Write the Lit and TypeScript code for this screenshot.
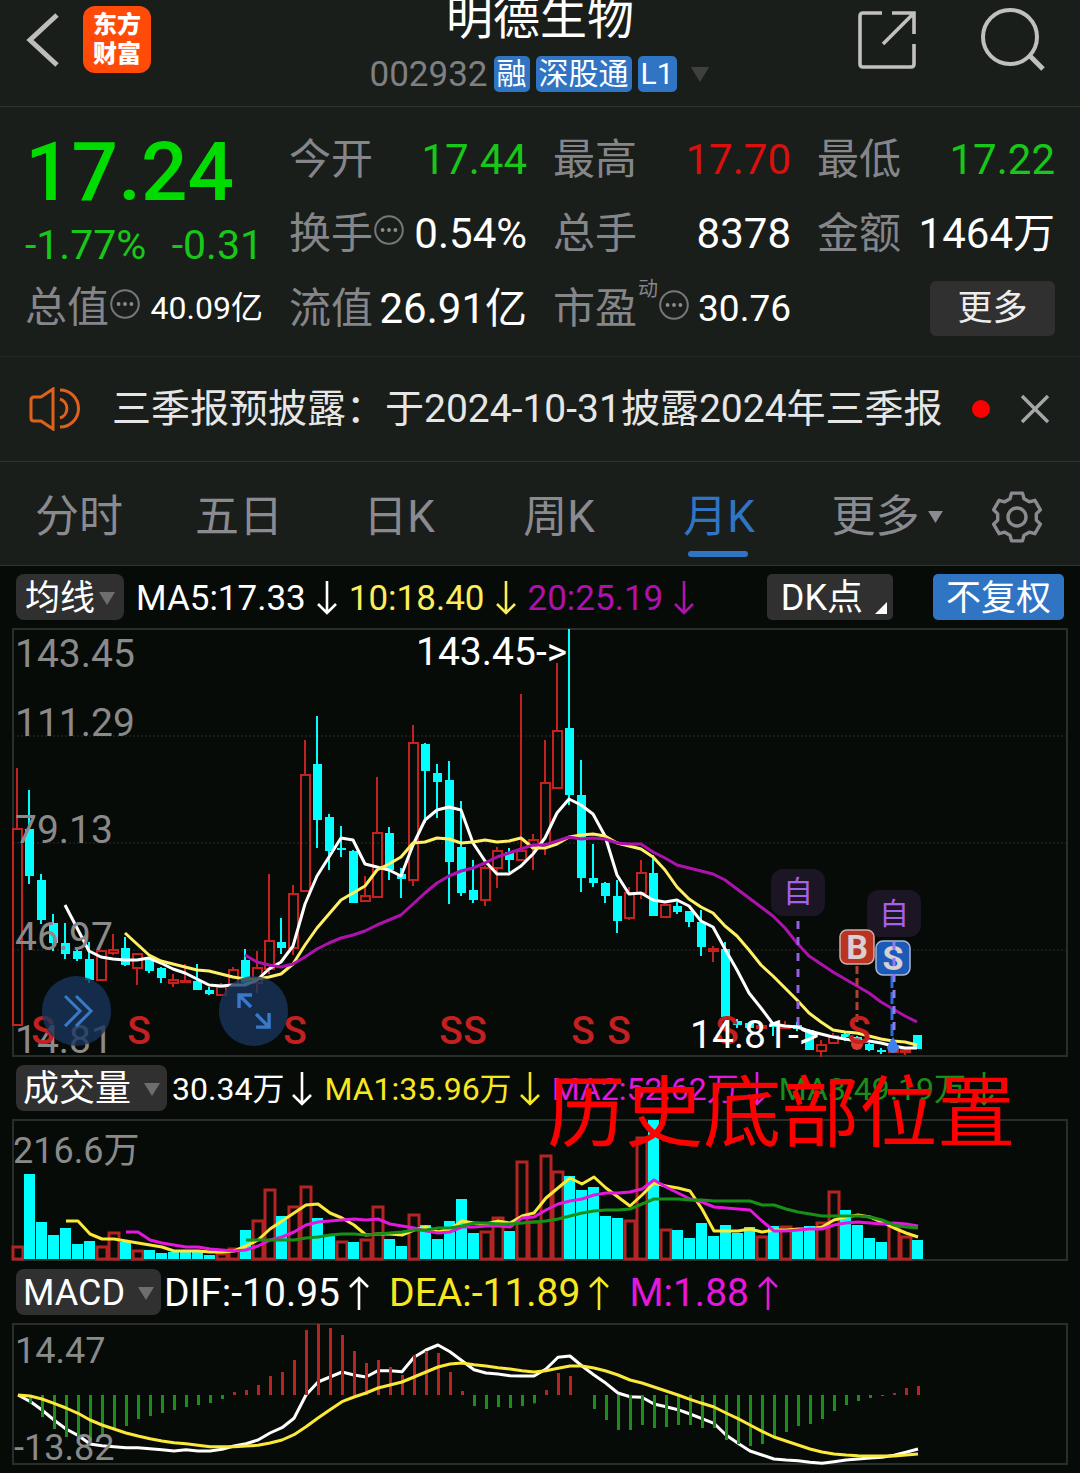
import { LitElement, html, svg, css, nothing } from "lit";
import { customElement, state } from "lit/decorators.js";

const STEP = 12;
const CYAN = "#00ffff";
const RED = "#c3221f";

type Candle = ["u" | "d", number, number, number, number];

// direction, high, body top, body bottom, low
const CANDLES: Candle[] = [
  ["u", 148, 209, 405, 405], ["d", 170, 209, 256, 264], ["d", 254, 260, 300, 304], ["d", 294, 303, 323, 331],
  ["d", 303, 323, 334, 339], ["d", 329, 331, 339, 341], ["d", 322, 339, 360, 363], ["u", 330, 331, 360, 360],
  ["u", 314, 330, 333, 335], ["d", 317, 328, 345, 346], ["u", 334, 334, 348, 365], ["d", 338, 339, 351, 353],
  ["d", 347, 348, 358, 363], ["u", 354, 360, 363, 367], ["u", 344, 361, 362, 362], ["d", 344, 361, 370, 370],
  ["d", 367, 370, 374, 375], ["u", 363, 367, 375, 375], ["u", 347, 350, 365, 367], ["d", 329, 340, 363, 365],
  ["u", 331, 348, 363, 373], ["u", 254, 321, 349, 354], ["d", 298, 322, 328, 334], ["u", 265, 274, 328, 335],
  ["u", 120, 155, 271, 271], ["d", 96, 144, 200, 228], ["d", 194, 197, 231, 250], ["d", 206, 228, 230, 237],
  ["d", 230, 231, 283, 283], ["u", 256, 276, 281, 281], ["u", 157, 213, 277, 277], ["d", 207, 213, 250, 260],
  ["d", 248, 254, 259, 278], ["u", 105, 123, 260, 266], ["d", 123, 124, 151, 203], ["d", 144, 153, 162, 198],
  ["d", 141, 160, 242, 284], ["d", 181, 227, 273, 276], ["d", 240, 270, 280, 283], ["u", 246, 248, 280, 286],
  ["u", 227, 231, 248, 268], ["d", 228, 232, 240, 252], ["u", 74, 231, 240, 240], ["u", 214, 220, 226, 250],
  ["u", 120, 163, 224, 235], ["u", 43, 111, 168, 168], ["d", 9, 108, 175, 185], ["d", 140, 175, 258, 272],
  ["d", 224, 258, 263, 267], ["d", 262, 263, 276, 283], ["d", 260, 276, 301, 313], ["u", 267, 273, 298, 300],
  ["u", 240, 253, 273, 279], ["d", 235, 253, 296, 296], ["u", 285, 285, 297, 297], ["d", 282, 286, 292, 294],
  ["d", 291, 291, 302, 307], ["d", 290, 302, 327, 336], ["u", 326, 329, 331, 342], ["d", 322, 329, 397, 397],
  ["d", 399, 401, 405, 408], ["d", 402, 403, 408, 409], ["u", 405, 406, 408, 408], ["d", 402, 405, 407, 416],
  ["u", 401, 406, 408, 409], ["d", 402, 405, 409, 411], ["d", 409, 410, 430, 430], ["u", 420, 425, 431, 437],
  ["u", 413, 416, 423, 423], ["d", 413, 414, 417, 421], ["d", 416, 417, 420, 421], ["d", 423, 424, 430, 431],
  ["d", 428, 430, 432, 434], ["u", 429, 430, 432, 432], ["u", 428, 430, 432, 435], ["d", 415, 415, 429, 429],
];

const MA5 = [
  285, 308, 331, 337, 339, 340, 340, 338, 343, 349, 353, 359, 365, 366, 365, 365, 360, 349, 342, 326, 284, 256, 237,
  218, 220, 244, 247, 250, 256, 225, 200, 190, 187, 190, 223, 241, 254, 254, 246, 234, 218, 193, 179, 185, 194, 216,
  255, 274, 273, 280, 282, 280, 286, 301, 307, 329, 350, 373, 388, 404, 406, 407, 411, 414, 417, 419, 421, 421, 423,
  426, 428, 428,
];
const MA10 = [
  313, 324, 335, 341, 344, 347, 350, 351, 354, 357, 359, 359, 357, 354, 344, 325, 308, 294, 280, 273, 266, 250, 244,
  237, 223, 222, 218, 219, 223, 222, 220, 222, 221, 218, 228, 228, 224, 217, 215, 214, 216, 223, 226, 229, 237, 250,
  267, 279, 287, 293, 306, 316, 330, 345, 356, 368, 380, 393, 402, 410, 412, 413, 416, 419, 421, 422, 425,
];
const MA20 = [
  335, 342, 345, 347, 344, 337, 329, 323, 318, 315, 311, 305, 300, 295, 284, 273, 263, 256, 251, 248, 243, 237, 233,
  229, 225, 225, 221, 217, 219, 218, 219, 223, 224, 224, 232, 238, 245, 248, 251, 254, 260, 269, 278, 287, 296, 308,
  323, 336, 344, 352, 359, 366, 373, 382, 389, 396, 402,
];

// Bar heights of the volume pane; negative means a falling month.
const VOLUMES = [
  13, -85, -37, -24, -31, -15, -18, 13, 27, -17, 9, -9, -6, -7, -8, -8, -4, 6, 11, -29, 39, 70, -43, 53, 73, -41, -23,
  18, -17, 20, 53, -20, -13, 45, -34, -20, -38, -60, -26, 28, 42, -28, 98, 38, 104, 88, -83, -69, -72, -43, -41, 39,
  122, -139, 30, -29, -21, -36, -23, -34, -26, -32, 23, -33, 33, -30, -33, 37, 68, -49, -34, -21, -17, 33, 23, -19,
];
const VOL5 = [
  161, 161, 174, 179, 179, 181, 183, 185, 187, 191, 191, 191, 192, 192, 191, 186, 180, 169, 161, 153, 145, 144, 153,
  158, 165, 175, 174, 174, 175, 170, 167, 172, 169, 161, 163, 164, 161, 163, 156, 153, 138, 128, 118, 124, 117, 128,
  137, 146, 135, 123, 126, 128, 131, 149, 171, 171, 171, 169, 172, 170, 170, 169, 169, 167, 160, 157, 155, 157, 162,
  168, 173, 177,
];
const VOL10 = [
  172, 172, 180, 183, 185, 187, 187, 189, 190, 191, 190, 186, 180, 177, 172, 165, 162, 161, 160, 159, 160, 159, 164,
  166, 168, 171, 173, 172, 167, 167, 166, 166, 167, 158, 157, 150, 144, 141, 139, 135, 133, 133, 132, 129, 120, 127,
  133, 139, 142, 147, 148, 149, 150, 161, 171, 171, 170, 169, 169, 165, 163, 162, 163, 164, 163, 164, 166,
];
const VOL20 = [
  180, 180, 180, 180, 180, 178, 177, 175, 174, 174, 175, 174, 173, 172, 170, 170, 168, 168, 166, 163, 163, 164, 164,
  163, 162, 161, 159, 156, 153, 151, 150, 150, 149, 144, 139, 139, 139, 140, 140, 141, 141, 141, 141, 145, 145, 149,
  152, 154, 156, 156, 156, 156, 157, 160, 165, 167, 168,
];

// MACD samples are kept in thirds of a unit; 405 is the zero line.
const ZERO = 405;
const HIST = [
  405, 430, 471, 507, 531, 540, 540, 528, 508, 498, 477, 468, 459, 450, 441, 435, 429, 417, 396, 390, 375, 348, 336,
  300, 210, 192, 204, 225, 273, 309, 300, 321, 345, 285, 273, 279, 336, 393, 438, 447, 441, 444, 438, 430, 390, 339,
  348, 405, 447, 480, 510, 510, 495, 504, 501, 495, 495, 504, 504, 540, 552, 558, 552, 535, 516, 498, 492, 477, 453,
  435, 423, 414, 408, 399, 384, 378,
];
const DIF = [
  405, 424, 450, 480, 507, 526, 552, 557, 560, 563, 563, 566, 569, 573, 569, 573, 573, 568, 558, 551, 540, 519, 503,
  475, 405, 366, 351, 336, 345, 351, 332, 332, 335, 292, 270, 255, 275, 302, 329, 339, 342, 347, 348, 348, 327, 292,
  288, 318, 345, 370, 399, 410, 412, 432, 440, 449, 462, 476, 490, 525, 550, 573, 585, 597, 600, 602, 607, 610, 605,
  600, 597, 594, 592, 586, 577, 567,
];
const DEA = [
  405, 408, 417, 430, 444, 460, 480, 495, 507, 519, 528, 536, 543, 548, 551, 556, 560, 560, 560, 558, 556, 549, 540,
  524, 500, 474, 449, 425, 411, 399, 384, 375, 366, 351, 336, 321, 312, 309, 314, 318, 323, 327, 332, 336, 332, 325,
  318, 318, 324, 333, 345, 360, 369, 381, 393, 405, 418, 430, 441, 459, 476, 495, 514, 531, 543, 555, 567, 576, 582,
  585, 587, 588, 588, 588, 585, 582,
];

const line = (values: number[], first: number, x0: number, color: string, div = 1) => svg`
  <polyline points=${values.map((v, i) => `${x0 + (first + i) * STEP},${(v / div).toFixed(1)}`).join(" ")}
    fill="none" stroke=${color} stroke-width="3" stroke-linejoin="round"></polyline>`;

const arrow = (up: boolean) => html`
  <svg class="arrow" viewBox="0 0 20 34" aria-hidden="true">
    <path d=${up ? "M10 34V2M1 11L10 2L19 11" : "M10 0V32M1 23L10 32L19 23"} fill="none" stroke="currentColor" stroke-width="2.6"></path>
  </svg>`;

const caret = (cls: string) => html`
  <svg class=${cls} viewBox="0 0 16 13" aria-hidden="true"><path d="M0 0H16L8 13Z" fill="currentColor"></path></svg>`;

const info = html`
  <svg class="info" viewBox="0 0 30 30" aria-hidden="true">
    <circle cx="15" cy="15" r="13.8" fill="none" stroke="#77777b" stroke-width="2"></circle>
    <g fill="#8c8c91"><circle cx="8.6" cy="15" r="1.9"></circle><circle cx="15" cy="15" r="1.9"></circle><circle cx="21.4" cy="15" r="1.9"></circle></g>
  </svg>`;

const gearPath = (() => {
  const pts: string[] = [];
  for (let k = 0; k < 6; k++) {
    const a = (k * 60 - 90) * (Math.PI / 180);
    const at = (deg: number, r: number) => {
      const t = a + (deg * Math.PI) / 180;
      return `${(27 + r * Math.cos(t)).toFixed(1)} ${(27 + r * Math.sin(t)).toFixed(1)}`;
    };
    pts.push(at(-21, 19.5), at(-13, 24.5), at(13, 24.5), at(21, 19.5));
  }
  return `M${pts.join("L")}Z`;
})();

interface Quote { label: string; value: string; tone?: string; info?: boolean; sup?: string; small?: boolean }

const QUOTES: Quote[] = [
  { label: "今开", value: "17.44", tone: "down" },
  { label: "最高", value: "17.70", tone: "up" },
  { label: "最低", value: "17.22", tone: "down" },
  { label: "换手", value: "0.54%", info: true },
  { label: "总手", value: "8378" },
  { label: "金额", value: "1464万" },
  { label: "流值", value: "26.91亿" },
  { label: "市盈", value: "30.76", info: true, sup: "动", small: true },
];

const TABS = ["分时", "五日", "日K", "周K", "月K"];

@customElement("app-root")
export class AppRoot extends LitElement {
  @state() private tab = "月K";

  static styles = css`
    :host {
      display: block;
      background: #070b08;
      color: #fff;
      font-family: Roboto, "Noto Sans CJK SC", sans-serif;
      font-size: 36px;
      line-height: 1;
    }
    * { box-sizing: border-box; }
    svg { display: block; flex: none; }
    h1, p, dl, dd, dt { margin: 0; font-weight: 400; }
    button {
      appearance: none; border: 0; padding: 0; margin: 0; background: none; color: inherit;
      font: inherit; cursor: pointer; white-space: nowrap;
    }
    .top { background: #1a1e1a; }
    header {
      display: grid; grid-template-columns: 1fr auto 1fr; height: 107px;
      border-bottom: 1px solid #30342f; overflow: hidden;
    }
    .left { display: flex; align-items: flex-start; gap: 22px; padding: 6px 0 0 25px; }
    .back, .search, .share { display: block; }
    .back svg { width: 36px; height: 68px; }
    .logo {
      display: grid; place-content: center; width: 68px; height: 67px; border-radius: 12px;
      background: #ff4a08; font-size: 24px; line-height: 29px; font-weight: 900; text-align: center;
    }
    .name { display: flex; flex-direction: column; align-items: center; }
    h1 { font-size: 47px; line-height: 56px; margin-top: -10px; }
    .code { display: flex; align-items: center; gap: 6px; height: 36px; margin-top: 10px; font-size: 35px; color: #7f7f84; }
    .badge {
      height: 36px; padding: 0 3px; border-radius: 5px; background: #3074c4; color: #fff;
      font-size: 30px; line-height: 36px;
    }
    .drop { width: 22px; height: 15px; margin-left: 6px; color: #3d403d; }
    .right { display: flex; justify-content: flex-end; align-items: flex-start; gap: 55px; padding: 6px 35px 0 0; }
    .right svg { width: 68px; height: 68px; }

    .quote {
      display: grid; grid-template-columns: 238fr 766fr; gap: 26px; height: 250px; padding: 16px 25px 10px;
      border-bottom: 1px solid #252925; font-size: 42px;
    }
    .price { height: 96px; color: #00dc00; font-size: 82px; line-height: 98px; font-weight: 500; }
    .change { display: flex; align-items: center; justify-content: space-between; height: 52px; color: #18c818; font-size: 41px; }
    .grid { display: grid; grid-template-columns: repeat(3, 1fr); column-gap: 26px; }
    .cell { display: flex; align-items: center; height: 74px; white-space: nowrap; }
    .cell dt { display: flex; align-items: center; color: #85858a; }
    .cell dd { margin-left: auto; }
    .cell dd.small { font-size: 37px; }
    .cell dd.tiny { font-size: 32px; }
    .down { color: #18c818; }
    .up { color: #d9100c; }
    .info { width: 30px; height: 30px; margin: 0 0 8px 1px; }
    .sup { font-size: 20px; margin: 0 0 40px 1px; }
    .more {
      align-self: center; justify-self: end; width: 125px; height: 55px; border-radius: 6px;
      background: #303030; color: #ededed; font-size: 35px;
    }

    .news {
      display: flex; align-items: center; height: 105px; padding: 0 28px; border-bottom: 1px solid #30342f;
      color: #e6e6e6; font-size: 39px;
    }
    .news a { color: inherit; text-decoration: none; white-space: nowrap; margin-left: 32px; flex: 1; }
    .speaker { width: 52px; height: 44px; }
    .dot { width: 18px; height: 18px; border-radius: 50%; background: #f00; margin-right: 28px; }
    .close svg { width: 34px; height: 34px; }

    nav {
      display: grid; grid-template-columns: repeat(5, 160fr) 176fr 84fr; height: 104px; padding-right: 20px;
      border-bottom: 1px solid #30342f; font-size: 44px; color: #8a8a90;
    }
    nav button { position: relative; display: flex; align-items: center; justify-content: center; gap: 8px; padding: 6px 2px 0 0; }
    nav .on { color: #3074c4; }
    nav .on::after {
      content: ""; position: absolute; left: 50%; bottom: 8px; width: 60px; height: 6px; margin-left: -32px;
      border-radius: 3px; background: #3074c4;
    }
    nav .mini { width: 15px; height: 12px; }
    .gear { width: 54px; height: 54px; }

    .bar { display: flex; align-items: center; padding: 0 16px; white-space: nowrap; }
    .bar .pill {
      display: flex; align-items: center; height: 46px; padding: 2px 7px 0; border-radius: 8px;
      background: #303030; color: #fff; font-size: 36px;
    }
    .pill .mini { width: 16px; height: 13px; margin-left: 13px; color: #6c6f6c; }
    .bar .tight { padding: 2px 9px 0; font-size: 35px; }
    .tight .mini { margin-left: 4px; }
    .bar .wide { position: relative; padding: 2px 30px 0 14px; margin-left: auto; border-radius: 5px; }
    .corner { position: absolute; right: 6px; bottom: 6px; width: 12px; height: 12px; }
    .bar .blue { background: #3074c4; margin: 0 0 0 40px; padding: 2px 13px 0; border-radius: 5px; font-size: 35px; }
    .stat { display: flex; align-items: center; padding-top: 2px; }
    .arrow { width: 20px; height: 34px; margin-left: 9px; }
    .ma { height: 54px; padding-top: 8px; font-size: 35px; }
    .ma .stat { margin-left: 12px; }
    .ma .arrow { margin-left: 11px; }
    .volume { height: 56px; font-size: 32px; }
    .volume .stat { margin-left: 12px; }
    .volume .arrow { margin-left: 8px; }
    .volume .pill + .stat { margin-left: 5px; }
    .macd { height: 52px; padding-top: 4px; font-size: 39px; }
    .macd .stat { margin-left: 20px; }
    .macd .pill + .stat { margin-left: 3px; }
    .white { color: #fff; }
    .gold { color: #fcee5a; }
    .purple { color: #ae12ae; }
    .yellow { color: #f8e720; }
    .pink { color: #e318dc; }
    .green { color: #189018; }

    .pane { position: relative; }
    .pane > svg { width: 100%; height: auto; }
    .round {
      position: absolute; top: 81%; width: 6.4%; aspect-ratio: 1; border-radius: 50%;
      background: rgba(24, 53, 92, 0.78);
    }
    .round svg { width: 100%; height: 100%; }
    .expand { left: 3.9%; }
    .full { left: 20.3%; }
    .note {
      position: absolute; right: 6%; top: 13px; z-index: 1; color: #f00; font-size: 78px; line-height: 84px;
      white-space: nowrap;
    }
    .vol { position: relative; }
    .axis { fill: #8a8a8a; font-size: 39px; }
    .axis-s { fill: #8a8a8a; font-size: 36px; }
    .peak { fill: #fff; font-size: 39px; }
    .sell { fill: #c42020; font-size: 39px; font-weight: 500; text-anchor: middle; }
    .self { fill: #a561ea; font-size: 30px; text-anchor: middle; }
    .trade { fill: #d8d0d2; font-size: 34px; font-weight: 700; text-anchor: middle; }
  `;

  private quote(q: Quote) {
    return html`<dl class="cell">
      <dt>${q.label}${q.sup ? html`<span class="sup">${q.sup}</span>` : nothing}${q.info ? info : nothing}</dt>
      <dd class="${q.tone ?? ""} ${q.small ? "small" : ""}">${q.value}</dd>
    </dl>`;
  }

  private candle([dir, high, top, bottom, low]: Candle, i: number) {
    const x = 17 + i * STEP;
    const h = Math.max(bottom - top, 1);
    if (dir === "d") {
      return svg`<rect x=${x - 1} y=${high} width="2" height=${low - high} fill=${CYAN}></rect>
        <rect x=${x - 4} y=${top} width="9" height=${Math.max(h, 2)} fill=${CYAN}></rect>`;
    }
    return svg`<path d="M${x} ${high}V${top}M${x} ${bottom}V${low}M${x - 4} ${top}h9v${h}h-9z"
      fill="none" stroke=${RED} stroke-width="2"></path>`;
  }

  private priceChart() {
    return html`<svg viewBox="0 0 1080 440" role="img" aria-label="月K">
      <g fill="none" stroke="#2a2d2a" stroke-width="2">
        <rect x="13" y="9" width="1054" height="427"></rect>
        <path d="M13 116H1067M13 223H1067M13 330H1067" stroke-width="1" stroke-dasharray="2 2"></path>
      </g>
      ${CANDLES.map((c, i) => this.candle(c, i))}
      ${line(MA5, 4, 17, "#ffffff")} ${line(MA10, 9, 17, "#fff066")} ${line(MA20, 19, 17, "#ae12ae")}
      <g class="axis">
        <text x="15" y="47">143.45</text><text x="15" y="116">111.29</text><text x="15" y="223">79.13</text>
        <text x="15" y="330">46.97</text><text x="15" y="433">14.81</text>
      </g>
      ${[43, 139, 295, 451, 475, 583, 619, 727].map((x) => svg`<text class="sell" x=${x} y="424">S</text>`)}
      <text class="peak" x="416" y="45">143.45-&gt;</text>
      <text class="peak" x="690" y="428">14.81-&gt;</text>
      <rect x="771" y="249" width="54" height="47" rx="12" fill="#1c1624"></rect>
      <rect x="867" y="270" width="54" height="47" rx="12" fill="#1c1624"></rect>
      <text class="self" x="798" y="282">自</text>
      <text class="self" x="894" y="304">自</text>
      <path d="M798 301V408" stroke="#955fe2" stroke-width="3" stroke-dasharray="8 8"></path>
      <path d="M857 346V404" stroke="#b04030" stroke-width="3" stroke-dasharray="8 4"></path>
      <path d="M892 356V424" stroke="#2b6cd6" stroke-width="3" stroke-dasharray="12 4"></path>
      <rect x="840" y="310" width="34" height="34" rx="7" fill="#b93422" stroke="#cbb0ac" stroke-width="1.5"></rect>
      <rect x="876" y="321" width="34" height="34" rx="7" fill="#1c5ab8" stroke="#a9b8d4" stroke-width="1.5"></rect>
      <text class="trade" x="857" y="339">B</text>
      <text class="trade" x="893" y="350">S</text>
      <path d="M894 322V416" stroke="#8f7af0" stroke-width="3" stroke-dasharray="8 8"></path>
      <circle cx="857" cy="424" r="6" fill="#e0392f"></circle>
      <path d="M893 417L899 427A6 6 0 0 1 887 427Z" fill="#3f7ff0"></path>
      <text class="sell" x="859" y="424">S</text>
    </svg>`;
  }

  private volumeChart() {
    return html`<svg viewBox="0 56 1080 148" role="img" aria-label="成交量">
      <rect x="13" y="60" width="1054" height="140" fill="none" stroke="#2a2d2a" stroke-width="2"></rect>
      <text class="axis-s" x="13" y="103">216.6万</text>
      ${VOLUMES.map((v, i) => {
        const x = 18 + i * STEP;
        return v < 0
          ? svg`<rect x=${x - 6} y=${199 + v} width="11" height=${-v} fill=${CYAN}></rect>`
          : svg`<rect x=${x - 5} y=${200 - v} width="10" height=${v - 1} fill="none" stroke="#b32422" stroke-width="3"></rect>`;
      })}
      ${line(VOL5, 4, 18, "#fbe93a")} ${line(VOL10, 9, 18, "#e318dc")} ${line(VOL20, 19, 18, "#189018")}
    </svg>`;
  }

  private macdChart() {
    return html`<svg viewBox="0 56 1080 157" role="img" aria-label="MACD">
      <rect x="13" y="64" width="1054" height="140" fill="none" stroke="#2a2d2a" stroke-width="2"></rect>
      ${line(DIF, 0, 18, "#ffffff", 3)}
      ${HIST.map((v, i) => {
        const top = Math.min(v, ZERO) / 3;
        return svg`<rect x=${17 + i * STEP} y=${top} width="3" height=${Math.abs(v - ZERO) / 3} fill=${v < ZERO ? "#b82422" : "#1c8c1a"}></rect>`;
      })}
      ${line(DEA, 0, 18, "#fbe93a", 3)}
      <g class="axis-s"><text x="15" y="103">14.47</text><text x="14" y="200">-13.82</text></g>
    </svg>`;
  }

  render() {
    return html`
      <div class="top">
        <header>
          <div class="left">
            <button class="back" aria-label="返回">
              <svg viewBox="0 0 36 68"><path d="M32 9L5 34L32 59" fill="none" stroke="#bdbdbd" stroke-width="5"></path></svg>
            </button>
            <div class="logo">东方<br />财富</div>
          </div>
          <div class="name">
            <h1>明德生物</h1>
            <div class="code">
              <span>002932</span><span class="badge">融</span><span class="badge">深股通</span><span class="badge">L1</span>${caret("drop")}
            </div>
          </div>
          <div class="right">
            <button class="share" aria-label="分享">
              <svg viewBox="0 0 68 68" fill="none" stroke="#c0c0c0" stroke-width="3.6">
                <path d="M28 7H9Q6 7 6 10V58Q6 61 9 61H57Q60 61 60 58V38M38 7H60V28M59 8L29 38"></path>
              </svg>
            </button>
            <button class="search" aria-label="搜索">
              <svg viewBox="0 0 68 68" fill="none" stroke="#c0c0c0" stroke-width="4">
                <circle cx="33" cy="31" r="27"></circle><path d="M52 49L66 63" stroke-width="5"></path>
              </svg>
            </button>
          </div>
        </header>

        <section class="quote">
          <div>
            <p class="price">17.24</p>
            <p class="change"><span>-1.77%</span><span>-0.31</span></p>
            <dl class="cell"><dt>总值${info}</dt><dd class="tiny">40.09亿</dd></dl>
          </div>
          <div class="grid">${QUOTES.map((q) => this.quote(q))}<button class="more">更多</button></div>
        </section>

        <section class="news">
          <svg class="speaker" viewBox="0 0 52 44" fill="none" stroke="#e0621a" stroke-width="3">
            <path d="M25 2V42L13 34H6Q3 34 3 31V13Q3 10 6 10H13Z"></path>
            <path d="M32 12A10 10 0 0 1 32 31M32 3A18.5 18.5 0 0 1 32 40"></path>
          </svg>
          <a href="#report">三季报预披露：于2024-10-31披露2024年三季报</a>
          <span class="dot"></span>
          <button class="close" aria-label="关闭">
            <svg viewBox="0 0 34 34"><path d="M4 4L30 30M30 4L4 30" stroke="#a6a6aa" stroke-width="3.4"></path></svg>
          </button>
        </section>

        <nav>
          ${TABS.map((t) => html`<button class=${t === this.tab ? "on" : ""} @click=${() => (this.tab = t)}>${t}</button>`)}
          <button>更多${caret("mini")}</button>
          <button aria-label="设置">
            <svg class="gear" viewBox="0 0 54 54" fill="none" stroke="#8a8a90" stroke-width="3.4" stroke-linejoin="round">
              <path d=${gearPath}></path><circle cx="27" cy="27" r="9"></circle>
            </svg>
          </button>
        </nav>
      </div>

      <div class="bar ma">
        <button class="pill tight">均线${caret("mini")}</button>
        <span class="stat white">MA5:17.33${arrow(false)}</span>
        <span class="stat gold">10:18.40${arrow(false)}</span>
        <span class="stat purple">20:25.19${arrow(false)}</span>
        <button class="pill wide">DK点<svg class="corner" viewBox="0 0 12 12"><path d="M12 0V12H0Z" fill="#fff"></path></svg></button>
        <button class="pill blue">不复权</button>
      </div>
      <div class="pane">
        ${this.priceChart()}
        <button class="round expand" aria-label="展开">
          <svg viewBox="0 0 69 69" fill="none" stroke="#3a78c8" stroke-width="3"><path d="M23 20L38 35L23 50M34 20L49 35L34 50"></path></svg>
        </button>
        <button class="round full" aria-label="全屏">
          <svg viewBox="0 0 69 69" fill="none" stroke="#3a78c8" stroke-width="3.4">
            <path d="M33 19H20V32M20 19L32 31M37 51H50V37M50 51L37 38"></path>
          </svg>
        </button>
      </div>

      <div class="vol">
        <div class="bar volume">
          <button class="pill">成交量${caret("mini")}</button>
          <span class="stat white">30.34万${arrow(false)}</span>
          <span class="stat yellow">MA1:35.96万${arrow(false)}</span>
          <span class="stat pink">MA2:52.62万${arrow(false)}</span>
          <span class="stat green">MA3:49.19万${arrow(false)}</span>
        </div>
        <div class="pane">${this.volumeChart()}</div>
        <span class="note">历史底部位置</span>
      </div>

      <div class="bar macd">
        <button class="pill">MACD${caret("mini")}</button>
        <span class="stat white">DIF:-10.95${arrow(true)}</span>
        <span class="stat yellow">DEA:-11.89${arrow(true)}</span>
        <span class="stat pink">M:1.88${arrow(true)}</span>
      </div>
      <div class="pane">${this.macdChart()}</div>
    `;
  }
}
